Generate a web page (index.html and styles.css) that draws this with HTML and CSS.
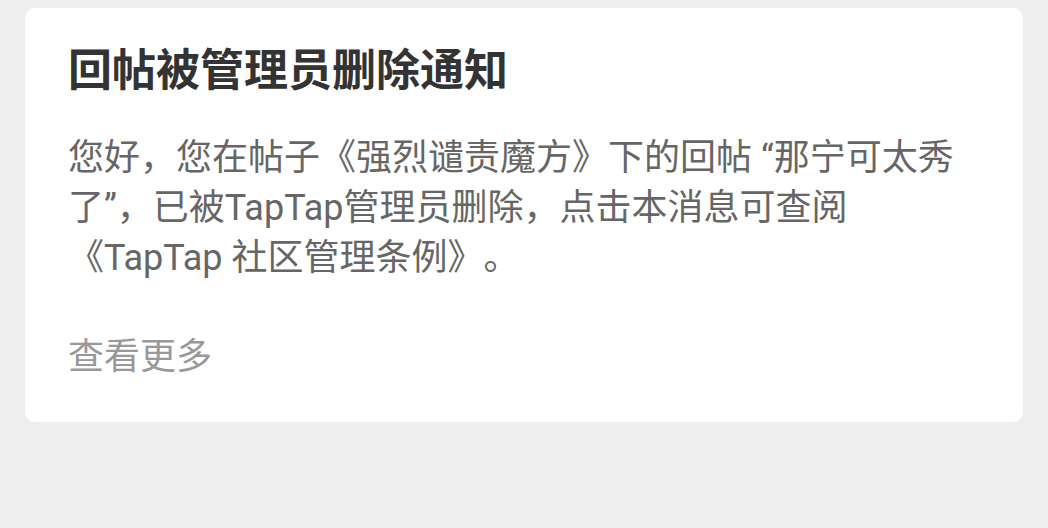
FILE: index.html
```html
<!DOCTYPE html>
<html lang="zh-CN">
<head>
<meta charset="utf-8">
<title>回帖被管理员删除通知</title>
<link rel="stylesheet" href="styles.css">
</head>
<body>
<div class="page">
  <div class="card">
    <h1 class="title">回帖被管理员删除通知</h1>
    <p class="message">您好，您在帖子《强烈谴责魔方》下的回帖 “那宁可太秀了”，已被TapTap管理员删除，点击本消息可查阅《TapTap 社区管理条例》。</p>
    <div class="more">查看更多</div>
  </div>
</div>
</body>
</html>
```
FILE: styles.css
```css
html, body {
  margin: 0;
  padding: 0;
  background: #eeeeee;
}
body {
  font-family: Roboto, "Noto Sans CJK SC", sans-serif;
  text-spacing-trim: space-all;
}
.page {
  padding: 8px 25px;
}
.card {
  background: #ffffff;
  border-radius: 10px;
  padding: 33px 43px 40px 43px;
}
.title {
  margin: 0;
  font-size: 44px;
  line-height: 60px;
  font-weight: 700;
  color: #333333;
}
.message {
  margin: 32px 0 0 0;
  font-size: 36px;
  line-height: 50px;
  color: #666666;
}
.more {
  margin-top: 49px;
  font-size: 36px;
  line-height: 50px;
  color: #999999;
}
```
